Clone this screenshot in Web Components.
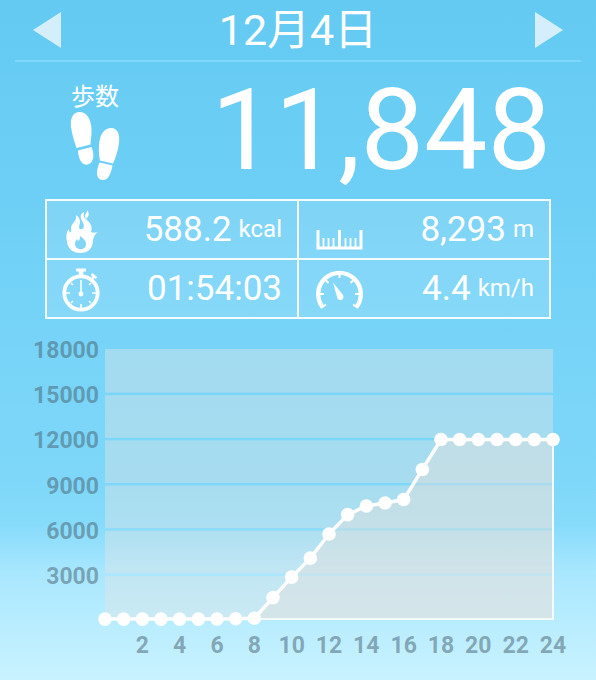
<!DOCTYPE html>
<html lang="ja">
<head>
<meta charset="utf-8">
<meta name="viewport" content="width=device-width, initial-scale=1">
<title>12月4日 歩数</title>
<style>
    html {
        min-height: 100%;
        background: #64caf2;
    }

    body {
        margin: 0;
        min-height: 100vh;
        box-sizing: border-box;
        color: #fff;
        font-family: Roboto, "Noto Sans CJK JP", sans-serif;
        background: linear-gradient(#64caf2 0%, #6dcff5 28%, #77d4f8 50%, #7ed7f9 70%, #86dbfa 77%, #a8e7fe 84%, #b9edff 92%, #c9f2ff 100%);
    }
</style>
</head>
<body>
<step-day>
    <day-header slot="header">12月4日</day-header>
    <step-count slot="steps" label="歩数">11,848</step-count>
    <stat-grid slot="stats">
        <stat-cell icon="flame" unit="kcal">588.2</stat-cell>
        <stat-cell icon="ruler" unit="m">8,293</stat-cell>
        <stat-cell icon="watch">01:54:03</stat-cell>
        <stat-cell icon="gauge" unit="km/h">4.4</stat-cell>
    </stat-grid>
    <step-chart slot="chart" max="18000" step="3000"
        values="60,60,60,60,60,60,70,80,120,1490,2850,4110,5710,7000,7570,7770,8000,10000,11990,11990,11990,11990,11990,11990,11990"></step-chart>
</step-day>

<script>
const ICONS = {
    flame: `
        <svg viewBox="0 0 48 48" fill="currentColor" aria-hidden="true">
            <path fill-rule="evenodd" d="M14 9C15 13 12 16 10 19C8 22 10 24 9 26C8 27 7 26 7 23C4 26 4 31 5 36C6 43 11 47 18 47C26 47 30 43 31 36C31 31 33 28 36 26C33 27 31 27 29 26C31 20 28 17 25 14C22 12 21 10 22 6C18 8 18 11 20 15C22 18 23 22 20 23C16 24 17 20 18 17C18 13 17 11 14 9ZM18 30C22 33 24 35 24 38C24 41 22 43 19 43C15 43 13 41 13 38C13 36 14 34 15 33L16 35C18 34 18 32 18 30Z"/>
            <path d="M25 4C26 7 21 8 24 13C28 9 27 7 25 4Z"/>
        </svg>`,
    ruler: `
        <svg viewBox="0 0 48 48" fill="none" stroke="currentColor" aria-hidden="true">
            <path stroke-width="3" d="M4 24V42H47V24M25.5 24V41"/>
            <path stroke-width="1.8" d="M9.5 32V41M14.5 32V41M19.5 32V41M31.5 32V41M36.5 32V41M41.5 32V41"/>
        </svg>`,
    watch: `
        <svg viewBox="0 0 48 48" fill="none" stroke="currentColor" aria-hidden="true">
            <circle cx="19" cy="28" r="16.7" stroke-width="3.8"/>
            <path stroke-width="3" d="M14 5H24"/>
            <path stroke-width="4.5" d="M19 5V11"/>
            <path stroke-width="2.5" d="M29.5 9L34.5 13M32 11L29.5 15"/>
            <path stroke-width="1.6" d="M19 15V28M19 39V43M4 28H8M30 28H34M9 18L11 20M29 18L27 20M9 38L11 36M29 38L27 36"/>
            <circle cx="19" cy="29" r="2.4" fill="currentColor" stroke="none"/>
        </svg>`,
    gauge: `
        <svg viewBox="0 0 48 48" fill="none" stroke="currentColor" aria-hidden="true">
            <path stroke-width="4.4" d="M8.5 42A21.3 21.3 0 1 1 42.5 42"/>
            <path stroke-width="2" d="M25.5 7V13M5 29H10M41 29H46M11 14.5L14.5 18M40 14.5L36.5 18M7 43L12 39.5M44 43L39 39.5"/>
            <path fill="currentColor" stroke="none" d="M19 17.5L29 30C31 34 26 37 23.5 33.5Z"/>
        </svg>`,
    steps: `
        <svg viewBox="0 0 50 70" fill="currentColor" aria-hidden="true">
            <path d="M1 15C0 6 3 0 10 0C18 0 22 10 21.5 20C21.5 25 20.5 29 20.5 32.5L6.5 36C4 29 2 22 1 15Z"/>
            <path d="M8 38.500L21.5 35C24.5 42 24 50 19 52C12 55 8.5 47 8 38.5Z"/>
            <path d="M29.5 29C31 21 35 16 41 16C48 16 50 23 49 31C48 38 46 45 43 51.5L30 48.5C28.5 42 28.5 35 29.5 29Z"/>
            <path d="M29.5 50.5L42.5 53.5C41 62 38 68 33 68C26 68 25.5 60 29.5 50.5Z"/>
        </svg>`
};

class StepDay extends HTMLElement {
    constructor() {
        super();
        this.attachShadow({ mode: 'open' });
        this.shadowRoot.innerHTML = `
            <style>
                :host {
                    display: block;
                }

                main {
                    display: flex;
                    flex-direction: column;
                }
            </style>
            <main>
                <slot name="header"></slot>
                <slot name="steps"></slot>
                <slot name="stats"></slot>
                <slot name="chart"></slot>
            </main>
        `;
    }
}

class DayHeader extends HTMLElement {
    constructor() {
        super();
        this.attachShadow({ mode: 'open' });
        this.shadowRoot.innerHTML = `
            <style>
                :host {
                    display: block;
                    margin: 0 15px;
                    border-bottom: 2px solid #7dd8fa;
                }

                header {
                    display: flex;
                    align-items: center;
                    justify-content: space-between;
                    height: 60px;
                    padding: 0 18px;
                }

                h1 {
                    margin: 0;
                    font-size: 43px;
                    font-weight: 400;
                    line-height: 60px;
                }

                button {
                    display: block;
                    padding: 0;
                    border: 0;
                    background: none;
                    color: #d4effb;
                    cursor: pointer;
                }

                svg {
                    display: block;
                    width: 28px;
                    height: 36px;
                }
            </style>
            <header>
                <button type="button" aria-label="前の日">
                    <svg viewBox="0 0 28 36" fill="currentColor"><path d="M28 0V36L0 18Z"/></svg>
                </button>
                <h1><slot></slot></h1>
                <button type="button" aria-label="次の日">
                    <svg viewBox="0 0 28 36" fill="currentColor"><path d="M0 0V36L28 18Z"/></svg>
                </button>
            </header>
        `;
    }
}

class StepCount extends HTMLElement {
    constructor() {
        super();
        this.attachShadow({ mode: 'open' });
    }

    connectedCallback() {
        this.shadowRoot.innerHTML = `
            <style>
                :host {
                    display: flex;
                    justify-content: space-between;
                    padding: 20px 45px 17px 70px;
                }

                .label {
                    display: flex;
                    flex-direction: column;
                    align-items: center;
                    font-size: 24px;
                    line-height: 30px;
                }

                svg {
                    display: block;
                    width: 50px;
                    height: 70px;
                }

                .value {
                    font-size: 113px;
                    line-height: 98px;
                }
            </style>
            <div class="label">${this.getAttribute('label')}${ICONS.steps}</div>
            <div class="value"><slot></slot></div>
        `;
    }
}

class StatGrid extends HTMLElement {
    constructor() {
        super();
        this.attachShadow({ mode: 'open' });
        this.shadowRoot.innerHTML = `
            <style>
                :host {
                    display: grid;
                    grid-template-columns: 1fr 1fr;
                    margin: 0 45px;
                    border: solid #f4fcff;
                    border-width: 2px 0 0 2px;
                    background: rgba(255, 255, 255, 0.12);
                }
            </style>
            <slot></slot>
        `;
    }
}

class StatCell extends HTMLElement {
    constructor() {
        super();
        this.attachShadow({ mode: 'open' });
    }

    connectedCallback() {
        const unit = this.getAttribute('unit');

        this.shadowRoot.innerHTML = `
            <style>
                :host {
                    display: flex;
                    align-items: center;
                    justify-content: space-between;
                    height: 57px;
                    padding: 0 15px;
                    border: solid #f4fcff;
                    border-width: 0 2px 2px 0;
                }

                svg {
                    display: block;
                    width: 48px;
                    height: 48px;
                    overflow: visible;
                }

                .reading {
                    display: flex;
                    align-items: center;
                    gap: 7px;
                    font-size: 35px;
                    line-height: 57px;
                }

                .unit {
                    font-size: 24px;
                }
            </style>
            ${ICONS[this.getAttribute('icon')]}
            <div class="reading">
                <span><slot></slot></span>
                ${unit ? `<span class="unit">${unit}</span>` : ''}
            </div>
        `;
    }
}

class StepChart extends HTMLElement {
    constructor() {
        super();
        this.attachShadow({ mode: 'open' });
    }

    connectedCallback() {
        this.max = Number(this.getAttribute('max'));
        this.step = Number(this.getAttribute('step'));
        this.values = this.getAttribute('values').split(',').map(Number);
        this.render();
    }

    renderPlot() {
        const w = 448;
        const h = 271;
        const last = this.values.length - 1;
        const y = value => h - value / this.max * h;
        const points = this.values.map((value, i) => [i * w / last, y(value)]);
        const line = points.map(p => p.join(' ')).join('L');

        // the grid lines are gaps between the bands, where the sky shows through
        let bands = '';
        for (let v = this.max; v > 0; v -= this.step) {
            const top = v === this.max ? 0 : y(v) + 1;
            const bottom = v === this.step ? h : y(v - this.step) - 1.5;
            bands += `<rect class="band" y="${top}" width="${w}" height="${bottom - top}"/>`;
        }

        return `
            <svg viewBox="0 0 ${w} ${h}" role="img" aria-label="時間ごとの歩数">
                ${bands}
                <path class="area" d="M${line}V${h}H0Z"/>
                <path class="frame" d="M0 ${h - 1}H${w}V${points[last][1]}"/>
                <path class="line" d="M${line}"/>
                ${points.map(p => `<circle cx="${p[0]}" cy="${p[1]}" r="6.8"/>`).join('')}
            </svg>
        `;
    }

    render() {
        const rows = [];
        for (let v = this.max; v > 0; v -= this.step) rows.push(v);

        const hours = [];
        for (let t = 2; t < this.values.length; t += 2) hours.push(t);

        this.shadowRoot.innerHTML = `
            <style>
                :host {
                    display: grid;
                    grid-template-columns: 66px 1fr;
                    column-gap: 6px;
                    margin: 30px 43px 20px 33px;
                    color: rgba(70, 95, 110, 0.5);
                    font-size: 23px;
                    font-weight: 700;
                    line-height: 24px;
                }

                .y-axis {
                    display: grid;
                    grid-auto-rows: 1fr;
                    margin-top: -10px;
                    margin-bottom: 10px;
                    text-align: right;
                }

                /* each label is centred on its hour, so the row is shifted by half a cell */
                .x-axis {
                    grid-column: 2;
                    display: grid;
                    grid-template-columns: repeat(${hours.length}, 1fr);
                    margin: 14px calc(-100% / 24) 0 calc(100% / 24);
                    text-align: center;
                }

                svg {
                    display: block;
                    width: 100%;
                    overflow: visible;
                }

                .band {
                    fill: rgba(232, 228, 226, 0.39);
                }

                .area {
                    fill: rgba(229, 224, 219, 0.42);
                }

                .frame {
                    fill: none;
                    stroke: #f4fbfd;
                    stroke-width: 2;
                }

                .line {
                    fill: none;
                    stroke: #fff;
                    stroke-width: 3.5;
                }

                circle {
                    fill: #fff;
                }
            </style>
            <div class="y-axis">${rows.map(v => `<span>${v}</span>`).join('')}</div>
            ${this.renderPlot()}
            <div class="x-axis">${hours.map(t => `<span>${t}</span>`).join('')}</div>
        `;
    }
}

customElements.define('step-day', StepDay);
customElements.define('day-header', DayHeader);
customElements.define('step-count', StepCount);
customElements.define('stat-grid', StatGrid);
customElements.define('stat-cell', StatCell);
customElements.define('step-chart', StepChart);
</script>
</body>
</html>
